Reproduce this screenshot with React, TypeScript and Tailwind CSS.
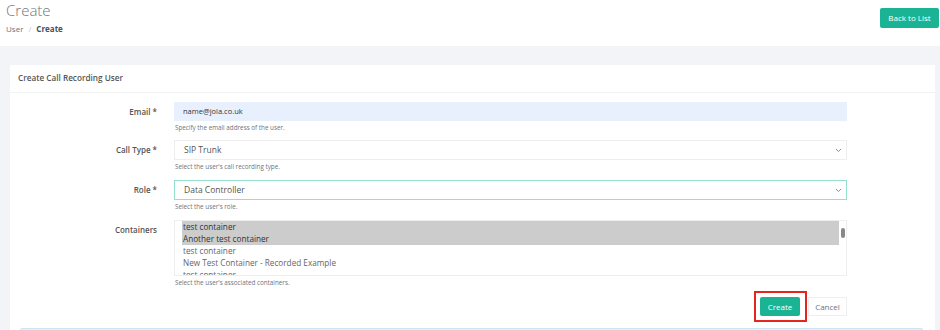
import React from 'react';

const font = { fontFamily: '"Open Sans", "Liberation Sans", sans-serif' };

function Chevron() {
  return (
    <svg width="7" height="5" viewBox="0 0 7 5" className="shrink-0" aria-hidden>
      <polyline points="1,1 3.5,3.5 6,1" fill="none" stroke="#8a8a8a" strokeWidth="1" />
    </svg>
  );
}

function Label({ text, h }: { text: string; h: string }) {
  return (
    <div className={`w-[147px] shrink-0 flex justify-end items-center text-[8px] font-semibold text-[#555] ${h}`}>
      {text}
    </div>
  );
}

function Help({ text }: { text: string }) {
  return <p className="mt-[2px] pl-[1px] text-[6.3px] leading-[9px] text-[#6c757d]">{text}</p>;
}

const containers = [
  { name: 'test container', selected: true },
  { name: 'Another test container', selected: true },
  { name: 'test container', selected: false },
  { name: 'New Test Container - Recorded Example', selected: false },
  { name: 'test container', selected: false },
];

export default function App() {
  return (
    <div className="w-[940px] h-[330px] overflow-hidden bg-[#f3f4f7]" style={font}>
      {/* page header */}
      <div className="h-[46px] bg-white flex justify-between pl-[6px] pr-[1px]">
        <div>
          <h1 className="mt-[3px] text-[15px] leading-none font-light text-[#6c757d]">Create</h1>
          <div className="mt-[6px] flex items-center gap-[5px] text-[8px] leading-[10px] text-[#6c757d]">
            <span>User</span>
            <span className="text-[#c0c4c8]">/</span>
            <span className="font-bold text-[#495057]">Create</span>
          </div>
        </div>
        <button className="mt-[8px] h-[20px] w-[59px] rounded-[2px] bg-[#1ab394] text-white text-[8px]">
          Back to List
        </button>
      </div>

      {/* card */}
      <div className="pt-[19px] pl-[10px]">
        <div className="w-[925px] bg-white">
          <div className="h-[28px] px-[8px] flex items-center border-b border-[#f1f2f4] text-[8.2px] font-semibold text-[#555]">
            Create Call Recording User
          </div>

          <div className="pt-[9px]">
            {/* email */}
            <div className="flex gap-[17px]">
              <Label text="Email *" h="h-[19px]" />
              <div className="w-[673px]">
                <div className="h-[19px] bg-[#e8f0fe] pl-[9px] flex items-center text-[7.5px] text-[#333]">
                  name@jola.co.uk
                </div>
                <Help text="Specify the email address of the user." />
              </div>
            </div>

            {/* call type */}
            <div className="flex gap-[17px] mt-[8px]">
              <Label text="Call Type *" h="h-[20px]" />
              <div className="w-[673px]">
                <div className="h-[20px] border border-[#eeeeee] pl-[9px] pr-[4px] flex items-center justify-between text-[8.5px] text-[#555]">
                  <span>SIP Trunk</span>
                  <Chevron />
                </div>
                <Help text="Select the user's call recording type." />
              </div>
            </div>

            {/* role */}
            <div className="flex gap-[17px] mt-[9px]">
              <Label text="Role *" h="h-[20px]" />
              <div className="w-[673px]">
                <div className="h-[20px] border border-[#93e0ce] pl-[9px] pr-[4px] flex items-center justify-between text-[8.5px] text-[#555]">
                  <span>Data Controller</span>
                  <Chevron />
                </div>
                <Help text="Select the user's role." />
              </div>
            </div>

            {/* containers */}
            <div className="flex gap-[17px] mt-[9px]">
              <div className="w-[147px] shrink-0 h-[20px] flex justify-end items-center text-[8px] font-semibold text-[#555]">
                Containers
              </div>
              <div className="w-[673px]">
                <div className="relative h-[56px] border border-[#eeeeee] overflow-hidden pl-[7px] pr-[7px]">
                  {containers.map((c, i) => (
                    <div
                      key={i}
                      className={`pl-[1px] text-[8.2px] leading-[12px] ${c.selected ? 'bg-[#cccccc] text-[#333]' : 'text-[#666]'}`}
                    >
                      {c.name}
                    </div>
                  ))}
                  <div className="absolute right-[1px] top-[7px] w-[4px] h-[10px] rounded-full bg-[#888]" />
                </div>
                <Help text="Select the user's associated containers." />

                <div className="mt-[4px] flex justify-end items-center gap-[1px]">
                  <div className="border-2 border-[#e3261e] pl-[4px] pr-[5px] py-[4px]">
                    <button className="block h-[19px] w-[40px] rounded-[2px] bg-[#1ab394] text-white text-[8px]">
                      Create
                    </button>
                  </div>
                  <button className="h-[19px] w-[39px] border border-[#eeeeee] bg-white text-[8px] text-[#6c757d]">
                    Cancel
                  </button>
                </div>
              </div>
            </div>

            <div className="mt-[6px] ml-[10px] mr-[12px] h-[20px] border border-[#c9e7f4] bg-[#ddf1fa] rounded-[2px]" />
          </div>
        </div>
      </div>
    </div>
  );
}
